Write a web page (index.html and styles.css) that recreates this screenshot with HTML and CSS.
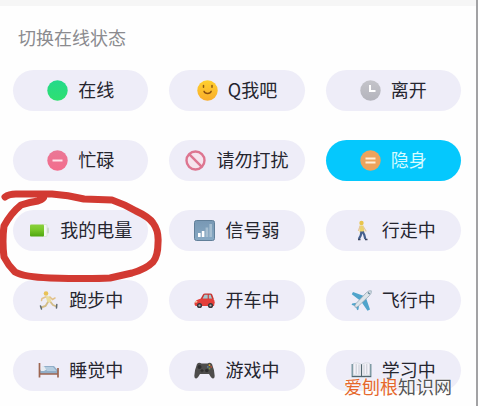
FILE: index.html
```html
<!DOCTYPE html>
<html lang="zh-CN">
<head>
  <meta charset="UTF-8">
  <meta name="viewport" content="width=device-width, initial-scale=1">
  <title>切换在线状态</title>
  <link rel="stylesheet" href="styles.css">
</head>
<body>
  <main class="panel">
    <h1 class="title">切换在线状态</h1>

    <div class="status-grid">
      <button type="button" class="status">
        <svg class="icon" viewBox="0 0 21 21" aria-hidden="true">
          <defs><linearGradient id="green" x2="0" y2="1"><stop stop-color="#24d98b"/><stop offset="1" stop-color="#2fe070"/></linearGradient></defs>
          <circle cx="10.500" cy="10.500" r="10.200" fill="url(#green)"/>
        </svg>
        <span class="label">在线</span>
      </button>

      <button type="button" class="status">
        <svg class="icon" viewBox="0 0 21 21" aria-hidden="true">
          <defs><linearGradient id="smile" x2="0" y2="1"><stop stop-color="#ffd02e"/><stop offset="1" stop-color="#f9ad2b"/></linearGradient></defs>
          <circle cx="10.500" cy="10.500" r="10.200" fill="url(#smile)"/>
          <path d="M6.500 5.500v1.800M15 5.500v1.800" stroke="#8a5a14" stroke-width="1.500" stroke-linecap="round"/>
          <path d="M7 11.300c1 2.900 6.200 2.900 7.200 0" fill="none" stroke="#8a4f10" stroke-width="1.400" stroke-linecap="round"/>
        </svg>
        <span class="label">Q我吧</span>
      </button>

      <button type="button" class="status">
        <svg class="icon" viewBox="0 0 21 21" aria-hidden="true">
          <defs><linearGradient id="clock" x2="0" y2="1"><stop stop-color="#c4c4ca"/><stop offset="1" stop-color="#b4b4bc"/></linearGradient></defs>
          <circle cx="10.500" cy="10.500" r="10.200" fill="url(#clock)"/>
          <path d="M10 5v6h5.500" fill="none" stroke="#fff" stroke-width="2"/>
        </svg>
        <span class="label">离开</span>
      </button>

      <button type="button" class="status">
        <svg class="icon" viewBox="0 0 21 21" aria-hidden="true">
          <defs><linearGradient id="pink" x2="0" y2="1"><stop stop-color="#ea7896"/><stop offset="1" stop-color="#f36c8c"/></linearGradient></defs>
          <circle cx="10.500" cy="10.500" r="10.200" fill="url(#pink)"/>
          <path d="M5.500 10.500h10" stroke="#ffe3ea" stroke-width="2"/>
        </svg>
        <span class="label">忙碌</span>
      </button>

      <button type="button" class="status">
        <svg class="icon" viewBox="0 0 21 21" aria-hidden="true">
          <circle cx="10.500" cy="10.500" r="9" fill="#f6e4ee" stroke="#dd7590" stroke-width="2.400"/>
          <path d="M4.200 4.200l12.600 12.600" stroke="#dd7590" stroke-width="2.400"/>
        </svg>
        <span class="label">请勿打扰</span>
      </button>

      <button type="button" class="status active" aria-pressed="true">
        <svg class="icon" viewBox="0 0 21 21" aria-hidden="true">
          <circle cx="10.500" cy="10.500" r="10.200" fill="#eda35c"/>
          <path d="M5.500 8.500h10M5.500 12.500h10" stroke="#fff0d8" stroke-width="2"/>
        </svg>
        <span class="label">隐身</span>
      </button>

      <button type="button" class="status">
        <svg class="icon" viewBox="0 0 21 21" aria-hidden="true">
          <defs><linearGradient id="charge" x2="0" y2="1"><stop stop-color="#8bd03c"/><stop offset=".4" stop-color="#7ac92b"/><stop offset="1" stop-color="#4ea60f"/></linearGradient></defs>
          <rect x="13" y="4.500" width="5" height="12" rx="1" fill="#f3f8f1" stroke="#cddccc" stroke-width=".6"/>
          <rect x="18" y="7.500" width="2" height="6" rx="1" fill="#ced9cd"/>
          <rect x="1" y="4.500" width="14" height="12" rx="1" fill="url(#charge)"/>
        </svg>
        <span class="label">我的电量</span>
      </button>

      <button type="button" class="status">
        <svg class="icon" viewBox="0 0 21 21" aria-hidden="true">
          <defs><linearGradient id="signal" x2="0" y2="1"><stop stop-color="#7898b4"/><stop offset="1" stop-color="#87a9c4"/></linearGradient></defs>
          <rect x=".5" y=".5" width="20" height="20" rx="2" fill="url(#signal)" stroke="#617f99"/>
          <path d="M4 13h2.600v4H4zM7.800 11h2.600v6H7.800z" fill="#fff"/>
          <path d="M11.600 7.500h2.600V17h-2.600zM15.400 4H18v13h-2.600z" fill="#a6bed1"/>
        </svg>
        <span class="label">信号弱</span>
      </button>

      <button type="button" class="status">
        <svg class="icon" viewBox="0 0 21 21" aria-hidden="true">
          <circle cx="10.500" cy="3" r="2.200" fill="#e8c44c"/>
          <path d="M8.500 5.500h4l1 7h-5z" fill="#ecd36b"/>
          <path d="M9 6.500l-1.500 4M12.500 7l2.500 4" stroke="#e6c79a" stroke-width="1.200" stroke-linecap="round"/>
          <path d="M10.500 11.500l-.8 4L7.800 19M11.500 11.500l1.800 3.500 1 4" fill="none" stroke="#45618f" stroke-width="2.200"/>
          <path d="M7 19.500h2.500M14 19.500h2.500" stroke="#39435c" stroke-width="1.500"/>
        </svg>
        <span class="label">行走中</span>
      </button>

      <button type="button" class="status">
        <svg class="icon" viewBox="0 0 21 21" aria-hidden="true">
          <circle cx="8" cy="3.500" r="2.300" fill="#e8c257"/>
          <path d="M7.500 6l4.500.5 1.500 5.500-4 1z" fill="#e9dd9e"/>
          <path d="M7.500 7L4 8.500l-.5 2M12 7l2.500 2.500L17 8" fill="none" stroke="#e2c18a" stroke-width="1.500" stroke-linecap="round"/>
          <path d="M10 12l-2.500 4L3 17.500M12.500 12l2.500 3 3.500 1.500" fill="none" stroke="#d3bd88" stroke-width="1.900"/>
          <path d="M2.500 16l1 3M18.800 14.500l-.3 3.500" stroke="#606b70" stroke-width="1.500" stroke-linecap="round"/>
        </svg>
        <span class="label">跑步中</span>
      </button>

      <button type="button" class="status">
        <svg class="icon" viewBox="0 0 21 21" aria-hidden="true">
          <path d="M6.500 9L9 4.500Q9.500 3.500 11 3.500h5.500q1.200 0 1.700 1l1.800 5z" fill="#c93431"/>
          <path d="M8.500 8.800l2-4h3.200v4zM14.800 4.800h1.800l1.500 4h-3.300z" fill="#a5c8cd"/>
          <path d="M.5 13Q1 10 6.500 8.700H19q1.800 1 1.700 3.800l-.7 3.500H1.500Q.3 15 .5 13z" fill="#e33e39"/>
          <circle cx="5.500" cy="15.500" r="2.600" fill="#37383c"/><circle cx="5.500" cy="15.500" r="1.100" fill="#b4b4b8"/>
          <circle cx="16.500" cy="15.500" r="2.600" fill="#37383c"/><circle cx="16.500" cy="15.500" r="1.100" fill="#b4b4b8"/>
          <path d="M1 11.500l2.500-.5-.5 1.500H1z" fill="#fbe4b5"/>
        </svg>
        <span class="label">开车中</span>
      </button>

      <button type="button" class="status">
        <svg class="icon" viewBox="0 0 21 21" aria-hidden="true">
          <path d="M13 6L2 2L.8 4.200 9 10.500zM15 8l4 11.500-2.500 1.200L10.500 12z" fill="#50a4cb"/>
          <path d="M5.500 12.800l-4.300.7-.6 1.300 3.700 1.400zM8 15.500l-.5 4-1.300.8-1.400-3.800z" fill="#50a4cb"/>
          <path d="M4 17.200Q3.300 15.500 5 13.500L15.500 2.500Q18 .2 20.300.8q.5 2.300-1.800 4.700L7.500 16q-2 1.800-3.500 1.200z" fill="#dde4e9" stroke="#92a7b5" stroke-width=".8"/>
          <path d="M17 2.500l1.700 1.700" stroke="#547c91" stroke-width="1.200"/>
        </svg>
        <span class="label">飞行中</span>
      </button>

      <button type="button" class="status">
        <svg class="icon" viewBox="0 0 21 21" aria-hidden="true">
          <path d="M2 11L5 6h11l4 4.500V14H2z" fill="#91aec8"/>
          <path d="M3 8.500Q3 6 5 6t3.500 3.500L6 11H3z" fill="#e7ecf2"/>
          <path d="M6.500 7h8.500l3.500 4H9z" fill="#b5cde0"/>
          <path d="M1.500 3v14.500M20 8v9.500M1.500 14H20" fill="none" stroke="#9d6651" stroke-width="1.700"/>
        </svg>
        <span class="label">睡觉中</span>
      </button>

      <button type="button" class="status">
        <svg class="icon" viewBox="0 0 21 21" aria-hidden="true">
          <path d="M3 4Q5 2 7.500 3.500h6Q16 2 18 4q2.500 6 2.700 12-.2 2.800-2 2.500-1.500-.3-3.700-4.500H6q-2.200 4.200-3.700 4.500-1.800.3-2-2.500Q.5 10 3 4z" fill="#4e4d4c"/>
          <circle cx="5.500" cy="7" r="2" fill="#2e2e2e"/><circle cx="12.800" cy="10.500" r="1.800" fill="#2e2e2e"/>
          <path d="M8 9v3.200M6.400 10.600h3.200" stroke="#302f2f" stroke-width="1.200"/>
          <circle cx="15.500" cy="5.200" r=".9" fill="#dfa830"/><circle cx="17.200" cy="6.900" r=".9" fill="#c24c39"/>
          <circle cx="13.800" cy="6.900" r=".9" fill="#5c7fa0"/><circle cx="15.500" cy="8.500" r=".9" fill="#7c9445"/>
        </svg>
        <span class="label">游戏中</span>
      </button>

      <button type="button" class="status">
        <svg class="icon" viewBox="0 0 21 21" aria-hidden="true">
          <path d="M1.200 4v12.500h18.600V4" fill="#e2e6ec" stroke="#6f8f99" stroke-width="1.300"/>
          <path d="M2.500 3q5-.8 8 1.300Q13.500 2.200 18.500 3v12q-5-.5-8 1-3-1.500-8-1z" fill="#f3f2f8" stroke="#c3c8d1" stroke-width=".5"/>
          <path d="M5.200 4v10M8 4.500v10M13 4.500v10M15.800 4v10" stroke="#c3c6d0" stroke-width=".9"/>
          <path d="M10.500 4.300v12.500M1 16.500h19" stroke="#52666f" stroke-width="1.200"/>
        </svg>
        <span class="label">学习中</span>
      </button>
    </div>

    <!-- hand-drawn ring around the battery status -->
    <svg class="marker" viewBox="0 0 170 100" aria-hidden="true">
      <path d="M5 14Q9 11 16 11L52 11Q68 12 84 16L112 17Q124 21 136 28Q149 34 153 40Q159 48 158 60Q158 73 153 79Q146 86 132 90L110 95Q90 96 50 95Q24 94 15 89Q8 82 4 74Q2 58 4 43Q11 30 21 22Q30 19 38 18Q44 16 44 13"/>
    </svg>

    <p class="watermark"><span>爱刨根</span>知识网</p>
  </main>
</body>
</html>
```
FILE: styles.css
```css
* {
  box-sizing: border-box;
}
body {
  margin: 0;
  background: #fefefe;
  color: #25252f;
  font-family: "Noto Sans CJK SC", sans-serif;
}
.panel {
  position: relative;
  min-height: 100vh;
  padding: 24px 15px 16px 13px;
  border-right: 2px solid #a2a2a4;
  background: linear-gradient(#f6f6f6 6px, #fefefe 6px);
}
.title {
  margin: 0 0 20px;
  padding-left: 5px;
  color: #8b8b8f;
  font-size: 18px;
  font-weight: 400;
  line-height: 26px;
}
.status-grid {
  display: grid;
  grid-template-columns: repeat(3, 1fr);
  gap: 29px 21px;
}
.status {
  display: flex;
  align-items: center;
  justify-content: center;
  gap: 10px;
  height: 41px;
  padding: 0;
  border: 0;
  border-radius: 21px;
  background: #eeedf8;
  color: inherit;
  font-family: inherit;
  font-size: 18px;
  line-height: 26px;
  white-space: nowrap;
  cursor: pointer;
}
.status.active {
  background: #05c8fd;
  color: #d5fbff;
}
.icon {
  flex: none;
  width: 21px;
  height: 21px;
}
.label {
  padding-bottom: 3px;
}
/* Overlays */
.marker {
  position: absolute;
  top: 183px;
  left: 0;
  width: 170px;
  height: 100px;
  fill: none;
  stroke: #d23a32;
  stroke-width: 7px;
  stroke-linecap: round;
  stroke-linejoin: round;
  pointer-events: none;
}
.watermark {
  position: absolute;
  right: 24px;
  bottom: 8px;
  margin: 0;
  color: #555;
  font-size: 18px;
  line-height: 26px;
  text-shadow: 0 0 2px #fff, 0 0 2px #fff;
}
.watermark span {
  color: #e5682c;
}
```
